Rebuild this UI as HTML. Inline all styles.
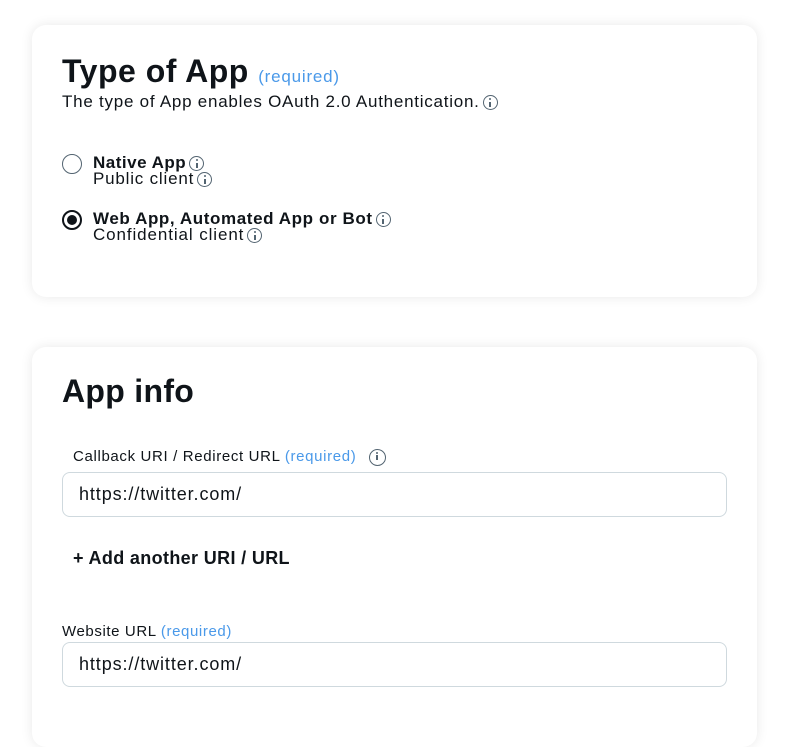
<!DOCTYPE html>
<html><head><meta charset="utf-8"><style>
*{box-sizing:border-box;margin:0;padding:0}
body{width:787px;height:719px;background:#fff;font-family:"Liberation Sans",Arial,sans-serif;color:#0f1419;position:relative;overflow:hidden}
.card{position:absolute;left:32px;width:725px;background:#fff;border-radius:14px;box-shadow:0 0 12px rgba(0,0,0,0.09)}
.abs{position:absolute;white-space:nowrap}
.req{color:#4a99e9;font-weight:normal}
.i{display:inline-block;width:15px;height:15px;border:1.3px solid #536471;border-radius:50%;position:relative;vertical-align:middle;margin-left:3px}
.i::before{content:"";position:absolute;left:5.5px;top:2px;width:2px;height:2px;background:#536471;border-radius:1px}
.i::after{content:"";position:absolute;left:5.5px;top:5.5px;width:2px;height:5px;background:#536471}
.radio{position:absolute;width:20px;height:20px;border-radius:50%;border:1.3px solid #536471}
.input{position:absolute;left:30px;width:665px;height:45px;border:1px solid #cfd9de;border-radius:8px;font-size:18px;letter-spacing:0.9px;padding:11px 0 0 16px;color:#0f1419}
</style></head><body>
<div class="card" style="top:25px;height:272px">
  <div class="abs" style="left:30px;top:28px;font-size:32px;font-weight:bold;letter-spacing:0.5px">Type of App <span class="req" style="font-size:17px;letter-spacing:0.8px">(required)</span></div>
  <div class="abs" style="left:30px;top:67px;font-size:17px;letter-spacing:0.75px">The type of App enables OAuth 2.0 Authentication.<span class="i"></span></div>
  <div class="radio" style="left:30px;top:129px"></div>
  <div class="abs" style="left:61px;top:128px;font-size:17px;font-weight:bold;letter-spacing:0.5px">Native App<span class="i"></span></div>
  <div class="abs" style="left:61px;top:144px;font-size:17px;line-height:20px;letter-spacing:0.8px">Public client<span class="i"></span></div>
  <div class="radio" style="left:30px;top:185px;border:2px solid #0f1419"><div style="position:absolute;left:3px;top:3px;width:10px;height:10px;border-radius:50%;background:#0f1419"></div></div>
  <div class="abs" style="left:61px;top:184px;font-size:17px;font-weight:bold;letter-spacing:0.6px">Web App, Automated App or Bot<span class="i"></span></div>
  <div class="abs" style="left:61px;top:200px;font-size:17px;line-height:20px;letter-spacing:0.9px">Confidential client<span class="i"></span></div>
</div>
<div class="card" style="top:347px;height:400px">
  <div class="abs" style="left:30px;top:26px;font-size:32px;font-weight:bold;letter-spacing:0.3px">App info</div>
  <div class="abs" style="left:41px;top:101px;font-size:15px;letter-spacing:0.65px">Callback URI / Redirect URL <span class="req">(required)</span> &nbsp;<span class="i" style="width:17px;height:17px"></span></div>
  <div class="input" style="top:125px">https://twitter.com/</div>
  <div class="abs" style="left:41px;top:201px;font-size:18px;font-weight:bold;letter-spacing:0.35px">+ Add another URI / URL</div>
  <div class="abs" style="left:30px;top:276px;font-size:15px;letter-spacing:0.6px">Website URL <span class="req">(required)</span></div>
  <div class="input" style="top:295px">https://twitter.com/</div>
</div>
</body></html>
